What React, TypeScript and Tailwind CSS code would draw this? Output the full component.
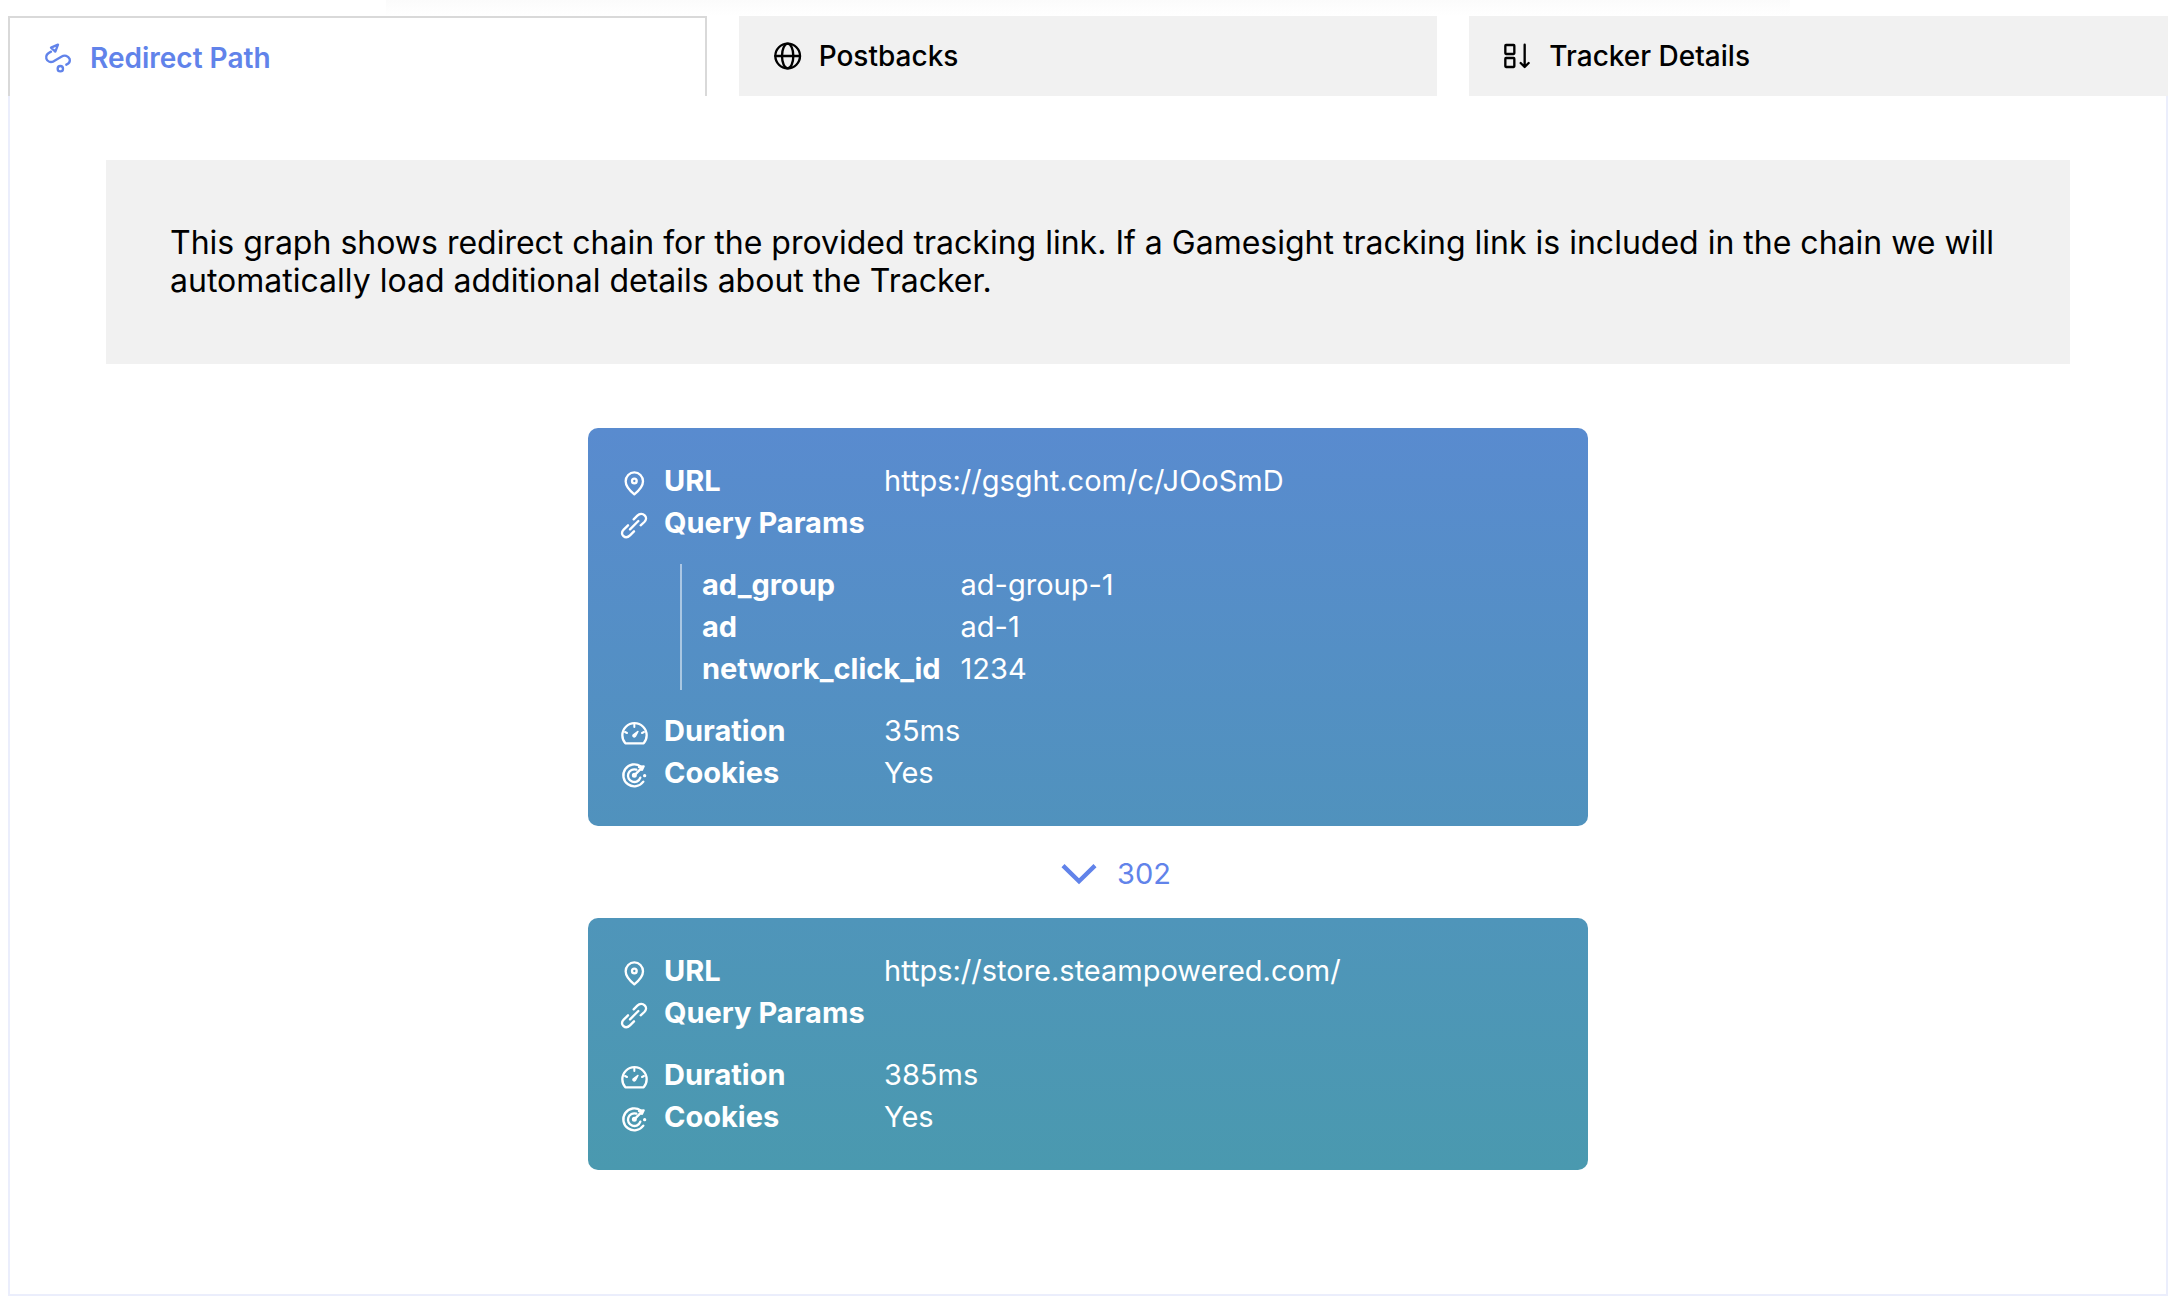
import type { ReactNode } from 'react';

type Hop = {
  url: string;
  params: { key: string; value: string }[];
  duration: string;
  cookies: string;
  status?: string;
  color: string;
};

const hops: Hop[] = [
  {
    url: 'https://gsght.com/c/JOoSmD',
    params: [
      { key: 'ad_group', value: 'ad-group-1' },
      { key: 'ad', value: 'ad-1' },
      { key: 'network_click_id', value: '1234' },
    ],
    duration: '35ms',
    cookies: 'Yes',
    status: '302',
    color: 'from-[#598bcf] to-[#5092bd]',
  },
  {
    url: 'https://store.steampowered.com/',
    params: [],
    duration: '385ms',
    cookies: 'Yes',
    color: 'from-[#4f95ba] to-[#4a99af]',
  },
];

function Icon({ size, className, children }: { size: number; className: string; children: ReactNode }) {
  return (
    <svg
      viewBox={`0 0 ${size} ${size}`}
      className={className}
      fill="none"
      stroke="currentColor"
      strokeWidth="7"
      strokeLinecap="round"
      strokeLinejoin="round"
      aria-hidden="true"
    >
      {children}
    </svg>
  );
}

const tabs = [
  {
    label: 'Redirect Path',
    icon: (
      <>
        <path d="M27 17 L48 8 L40 29 Z" />
        <path d="M27 29 C16 34 11 42 13 50 C16 60 26 62 35 58 L58 44 C68 38 79 41 83 51 C85 59 80 65 73 68" />
        <circle cx="55" cy="80" r="8" />
      </>
    ),
  },
  {
    label: 'Postbacks',
    icon: (
      <>
        <circle cx="50" cy="48" r="37" />
        <ellipse cx="50" cy="48" rx="17" ry="37" />
        <path d="M13 48 H87" />
      </>
    ),
  },
  {
    label: 'Tracker Details',
    icon: (
      <>
        <rect x="13" y="15" width="27" height="27" rx="2" />
        <rect x="13" y="54" width="27" height="27" rx="2" />
        <path d="M71 14 V81 M59 69 L71 81 L83 69" />
      </>
    ),
  },
];

const pinIcon = (
  <>
    <path d="M43 76 C29 65 17 53 17 37 A26 27 0 0 1 69 37 C69 53 57 65 43 76 Z" />
    <circle cx="43" cy="36" r="7" />
  </>
);

const linkIcon = (
  <path d="M41 25 L52 14 C59 7 68 7 74 13 C80 19 79 27 73 33 L62 43 M24 43 L11 56 C4 63 5 71 10 75 C16 80 24 79 30 73 L42 61 M30 55 L55 30" />
);

const gaugeIcon = (
  <>
    <path d="M16 73 C9 65 7 57 7 49 A36 36 0 0 1 80 49 C80 57 78 65 71 73 Z" />
    <path d="M43 14 V24 M15 39 L21 42 M72 39 L66 42" strokeWidth="6" />
    <path d="M54 37 L47 51 C44 56 37 54 39 48 Z" fill="currentColor" strokeWidth="4" />
  </>
);

const targetIcon = (
  <>
    <path d="M62 16 A33 33 0 1 0 70 62" />
    <path d="M49 26 A19 19 0 1 0 61 50" />
    <path d="M43 43 L66 20 M57 18 L71 16 L66 26" />
    <circle cx="43" cy="43" r="4" fill="currentColor" />
    <circle cx="74" cy="44" r="3" fill="currentColor" strokeWidth="4" />
  </>
);

function Row({ icon, label, value }: { icon: ReactNode; label: string; value?: string }) {
  return (
    <div className="flex items-center">
      <dt className="flex min-w-[264px] items-center gap-4 font-bold">
        <Icon size={84} className="mt-1 size-7 shrink-0">
          {icon}
        </Icon>
        {label}
      </dt>
      {value && <dd>{value}</dd>}
    </div>
  );
}

function HopCard({ hop }: { hop: Hop }) {
  return (
    <dl className={`w-full rounded-[10px] bg-linear-to-b p-8 text-[29px] leading-[42px] text-white ${hop.color}`}>
      <Row icon={pinIcon} label="URL" value={hop.url} />
      <Row icon={linkIcon} label="Query Params" />
      {hop.params.length > 0 && (
        <div className="mt-5 ml-15 grid grid-cols-[auto_1fr] gap-x-5 border-l-2 border-white/50 pl-5">
          {hop.params.map((p) => (
            <div key={p.key} className="contents">
              <dt className="font-bold">{p.key}</dt>
              <dd>{p.value}</dd>
            </div>
          ))}
        </div>
      )}
      <div className="mt-5">
        <Row icon={gaugeIcon} label="Duration" value={hop.duration} />
        <Row icon={targetIcon} label="Cookies" value={hop.cookies} />
      </div>
    </dl>
  );
}

export default function App() {
  return (
    <div className="bg-white pr-4 pb-3 pl-2 font-['Inter',sans-serif] text-black">
      <div className="mx-auto h-4 w-[65%] bg-linear-to-b from-[#fbfbfb] to-white" />

      <div role="tablist" className="grid grid-cols-3 gap-8">
        {tabs.map((tab, i) => (
          <button
            key={tab.label}
            type="button"
            role="tab"
            aria-selected={i === 0}
            className={`flex h-20 items-start gap-4 px-8 pt-6 text-[28px] leading-8 ${
              i === 0
                ? 'border-2 border-b-0 border-[#d9d9d9] bg-white font-semibold text-[#6183ea]'
                : 'bg-[#f1f1f1] font-medium'
            }`}
          >
            <Icon size={96} className="size-8 shrink-0">
              {tab.icon}
            </Icon>
            {tab.label}
          </button>
        ))}
      </div>

      <main className="border-2 border-t-0 border-[#ebeefc] px-24 pt-16 pb-31">
        <p className="bg-[#f1f1f1] p-16 text-[32px] leading-[38px]">
          This graph shows redirect chain for the provided tracking link. If a Gamesight tracking link is included in
          the chain we will automatically load additional details about the Tracker.
        </p>

        <div className="mx-auto mt-16 max-w-[1000px]">
          {hops.map((hop) => (
            <div key={hop.url}>
              <HopCard hop={hop} />
              {hop.status && (
                <div className="flex h-23 items-center justify-center gap-5 pt-1 pl-14 text-[29px] leading-[42px] text-[#6183ea]">
                  <Icon size={108} className="size-9">
                    <path d="M6 29 L54 76 L102 29" strokeWidth="13" strokeLinecap="butt" strokeLinejoin="miter" />
                  </Icon>
                  {hop.status}
                </div>
              )}
            </div>
          ))}
        </div>
      </main>
    </div>
  );
}
